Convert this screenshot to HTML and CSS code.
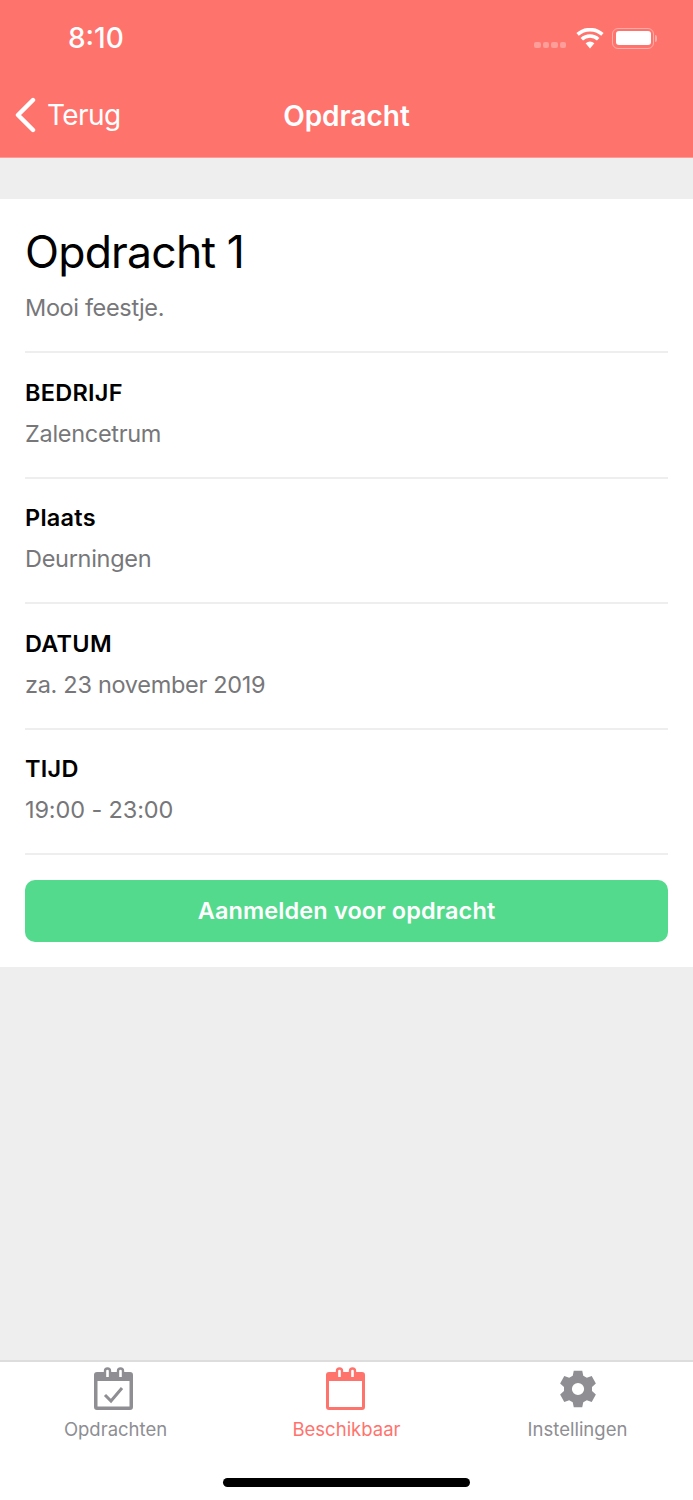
FILE: index.html
```html
<!DOCTYPE html>
<html lang="nl">
<head>
  <meta charset="UTF-8">
  <meta name="viewport" content="width=device-width, initial-scale=1.0">
  <title>Opdracht</title>
  <link rel="stylesheet" href="styles.css">
</head>
<body>
<div class="app">
  <header class="header">
    <div class="status-bar">
      <span class="time">8:10</span>
      <div class="status-icons">
        <div class="signal"><i></i><i></i><i></i><i></i></div>
        <svg class="wifi" width="28" height="21" viewBox="0 0 28 21">
          <path d="M14 20.5 L9.6 15.2 A7 7 0 0 1 18.4 15.2 Z" fill="#fff"/>
          <path d="M5.8 11.2 A12 12 0 0 1 22.2 11.2" fill="none" stroke="#fff" stroke-width="3.6"/>
          <path d="M1.6 6.4 A18.5 18.5 0 0 1 26.4 6.4" fill="none" stroke="#fff" stroke-width="3.6"/>
        </svg>
        <div class="battery"><div class="battery-level"></div></div>
        <div class="battery-cap"></div>
      </div>
    </div>
    <nav class="nav-bar">
      <div class="back">
        <svg width="22" height="36" viewBox="0 0 22 36">
          <path d="M19 3 L4 18 L19 33" fill="none" stroke="#fff" stroke-width="4.4" stroke-linecap="round" stroke-linejoin="round"/>
        </svg>
        <span>Terug</span>
      </div>
      <h1 class="nav-title">Opdracht</h1>
    </nav>
  </header>

  <main class="content">
    <section class="card">
      <div class="intro">
        <h2>Opdracht 1</h2>
        <p>Mooi feestje.</p>
      </div>
      <div class="row">
        <h3>BEDRIJF</h3>
        <p>Zalencetrum</p>
      </div>
      <div class="row">
        <h3>Plaats</h3>
        <p>Deurningen</p>
      </div>
      <div class="row">
        <h3>DATUM</h3>
        <p>za. 23 november 2019</p>
      </div>
      <div class="row">
        <h3>TIJD</h3>
        <p class="row-time">19:00 - 23:00</p>
      </div>
      <button class="signup"><span>Aanmelden voor opdracht</span></button>
    </section>
  </main>

  <footer class="tab-bar">
    <div class="tabs">
      <div class="tab">
        <svg class="tab-icon-left" width="42" height="44" viewBox="0 0 42 44">
          <path d="M4 5 H37 A3 3 0 0 1 40 8 V40 A3 3 0 0 1 37 43 H4 A3 3 0 0 1 1 40 V8 A3 3 0 0 1 4 5 Z M4.5 14 V39.500 H36.500 V14 Z" fill="#8e8e93" fill-rule="evenodd"/>
          <path d="M12 10 V4 A2.500 2.500 0 0 1 17 4 V10 M25 10 V4 A2.500 2.500 0 0 1 30 4 V10" fill="#fff" stroke="#8e8e93" stroke-width="2.400"/>
          <path d="M12 28 L18 34 L29 21" fill="none" stroke="#8e8e93" stroke-width="3"/>
        </svg>
        <span>Opdrachten</span>
      </div>
      <div class="tab tab-active">
        <svg class="tab-icon-mid" width="42" height="44" viewBox="0 0 42 44">
          <path d="M4 5 H37 A3 3 0 0 1 40 8 V40 A3 3 0 0 1 37 43 H4 A3 3 0 0 1 1 40 V8 A3 3 0 0 1 4 5 Z M4 14 V40 H37 V14 Z" fill="#ff736d" fill-rule="evenodd"/>
          <path d="M12 10 V4 A2.500 2.500 0 0 1 17 4 V10 M25 10 V4 A2.500 2.500 0 0 1 30 4 V10" fill="#fff" stroke="#ff736d" stroke-width="2.400"/>
        </svg>
        <span>Beschikbaar</span>
      </div>
      <div class="tab">
        <svg width="42" height="44" viewBox="0 0 42 44">
          <path transform="translate(21 22) scale(.94) translate(-21 -24.500)" d="M16.500 5 H25.500 L26.600 10.400 L30.400 12.600 L35.600 10.800 L40 18.600 L35.900 22.300 V26.700 L40 30.400 L35.600 38.200 L30.400 36.400 L26.600 38.600 L25.500 44 H16.500 L15.400 38.600 L11.600 36.400 L6.400 38.200 L2 30.400 L6.100 26.700 V22.300 L2 18.600 L6.400 10.800 L11.600 12.600 L15.400 10.400 Z M21 18 A6.500 6.500 0 1 0 21 31 A6.500 6.500 0 1 0 21 18 Z" fill="#8e8e93" fill-rule="evenodd"/>
        </svg>
        <span>Instellingen</span>
      </div>
    </div>
    <div class="home-bar"></div>
  </footer>
</div>
</body>
</html>
```

FILE: styles.css
```css
* {
  box-sizing: border-box;
}
body {
  margin: 0;
  font-family: Inter, "Liberation Sans", sans-serif;
}
h1, h2, h3, p {
  margin: 0;
}
.app {
  display: flex;
  flex-direction: column;
  height: 1500px;
  background: #eeeeee;
}

/* header */
.header {
  height: 158px;
  background: #ff736d;
  border-bottom: 1px solid #ff9a95;
  color: #fff;
}
.status-bar {
  height: 76px;
  display: flex;
  align-items: center;
  justify-content: space-between;
  padding: 0 36px 0 68px;
}
.time {
  font-size: 28px;
  font-weight: 500;
}
.status-icons {
  display: flex;
  align-items: center;
}
.signal {
  display: flex;
  gap: 2px;
  margin: 14px 10px 0 0;
}
.signal i {
  width: 6.5px;
  height: 6px;
  border-radius: 2px;
  background: #ff9e99;
}
.wifi {
  margin-right: 8px;
}
.battery {
  width: 42px;
  height: 21px;
  padding: 2.5px;
  border: 1.5px solid #ffaca8;
  border-radius: 6px;
}
.battery-level {
  height: 100%;
  background: #fff;
  border-radius: 3px;
}
.battery-cap {
  width: 2px;
  height: 7px;
  margin-left: 1px;
  background: #ffaca8;
  border-radius: 0 2px 2px 0;
}
.nav-bar {
  position: relative;
  height: 79px;
  display: flex;
  align-items: center;
  justify-content: center;
}
.back {
  position: absolute;
  left: 14px;
  top: 21px;
  display: flex;
  align-items: center;
  gap: 11px;
  font-size: 28px;
  letter-spacing: -0.6px;
}
.nav-title {
  font-size: 28px;
  font-weight: 600;
}

/* card */
.content {
  flex: 1;
  padding-top: 41px;
}
.card {
  background: #fff;
  padding: 0 25px 25px 25px;
}
.intro {
  height: 154px;
  padding-top: 26px;
  border-bottom: 2px solid #eeeeee;
}
.intro h2 {
  font-size: 44.5px;
  font-weight: 400;
  line-height: 54px;
  letter-spacing: -0.8px;
  color: #000;
}
.intro p {
  margin-top: 14px;
  font-size: 23.5px;
  line-height: 30px;
  letter-spacing: -0.35px;
  color: #77777a;
}
.row {
  height: 125.5px;
  padding-top: 24.5px;
  border-bottom: 2px solid #eeeeee;
}
.row h3 {
  font-size: 23.5px;
  font-weight: 600;
  line-height: 30px;
  letter-spacing: 0.25px;
  color: #000;
}
.row p {
  margin-top: 11px;
  font-size: 23.5px;
  line-height: 30px;
  letter-spacing: -0.3px;
  color: #77777a;
}
.row .row-time {
  letter-spacing: -0.13px;
}
.signup {
  display: block;
  width: 100%;
  height: 62px;
  margin-top: 25px;
  padding: 0 0 2px;
  border: none;
  border-radius: 10px;
  background: #53da8d;
  color: #fff;
  font-family: inherit;
  font-size: 23.5px;
  font-weight: 600;
  letter-spacing: 0.12px;
}

/* tab bar */
.tab-bar {
  height: 140px;
  background: #fff;
  border-top: 2px solid #dddddd;
}
.tabs {
  display: flex;
  padding-top: 5px;
}
.tab {
  flex: 1;
  display: flex;
  flex-direction: column;
  align-items: center;
  font-size: 18.5px;
  color: #8e8e93;
}
.tab span {
  margin-top: 6px;
  line-height: 24px;
}
.tab-icon-left {
  margin-right: 3px;
}
.tab-icon-mid {
  margin-right: 1px;
}
.tab-active {
  color: #ff736d;
}
.home-bar {
  width: 247px;
  height: 9px;
  margin: 37px auto 0;
  background: #000;
  border-radius: 5px;
}
```
